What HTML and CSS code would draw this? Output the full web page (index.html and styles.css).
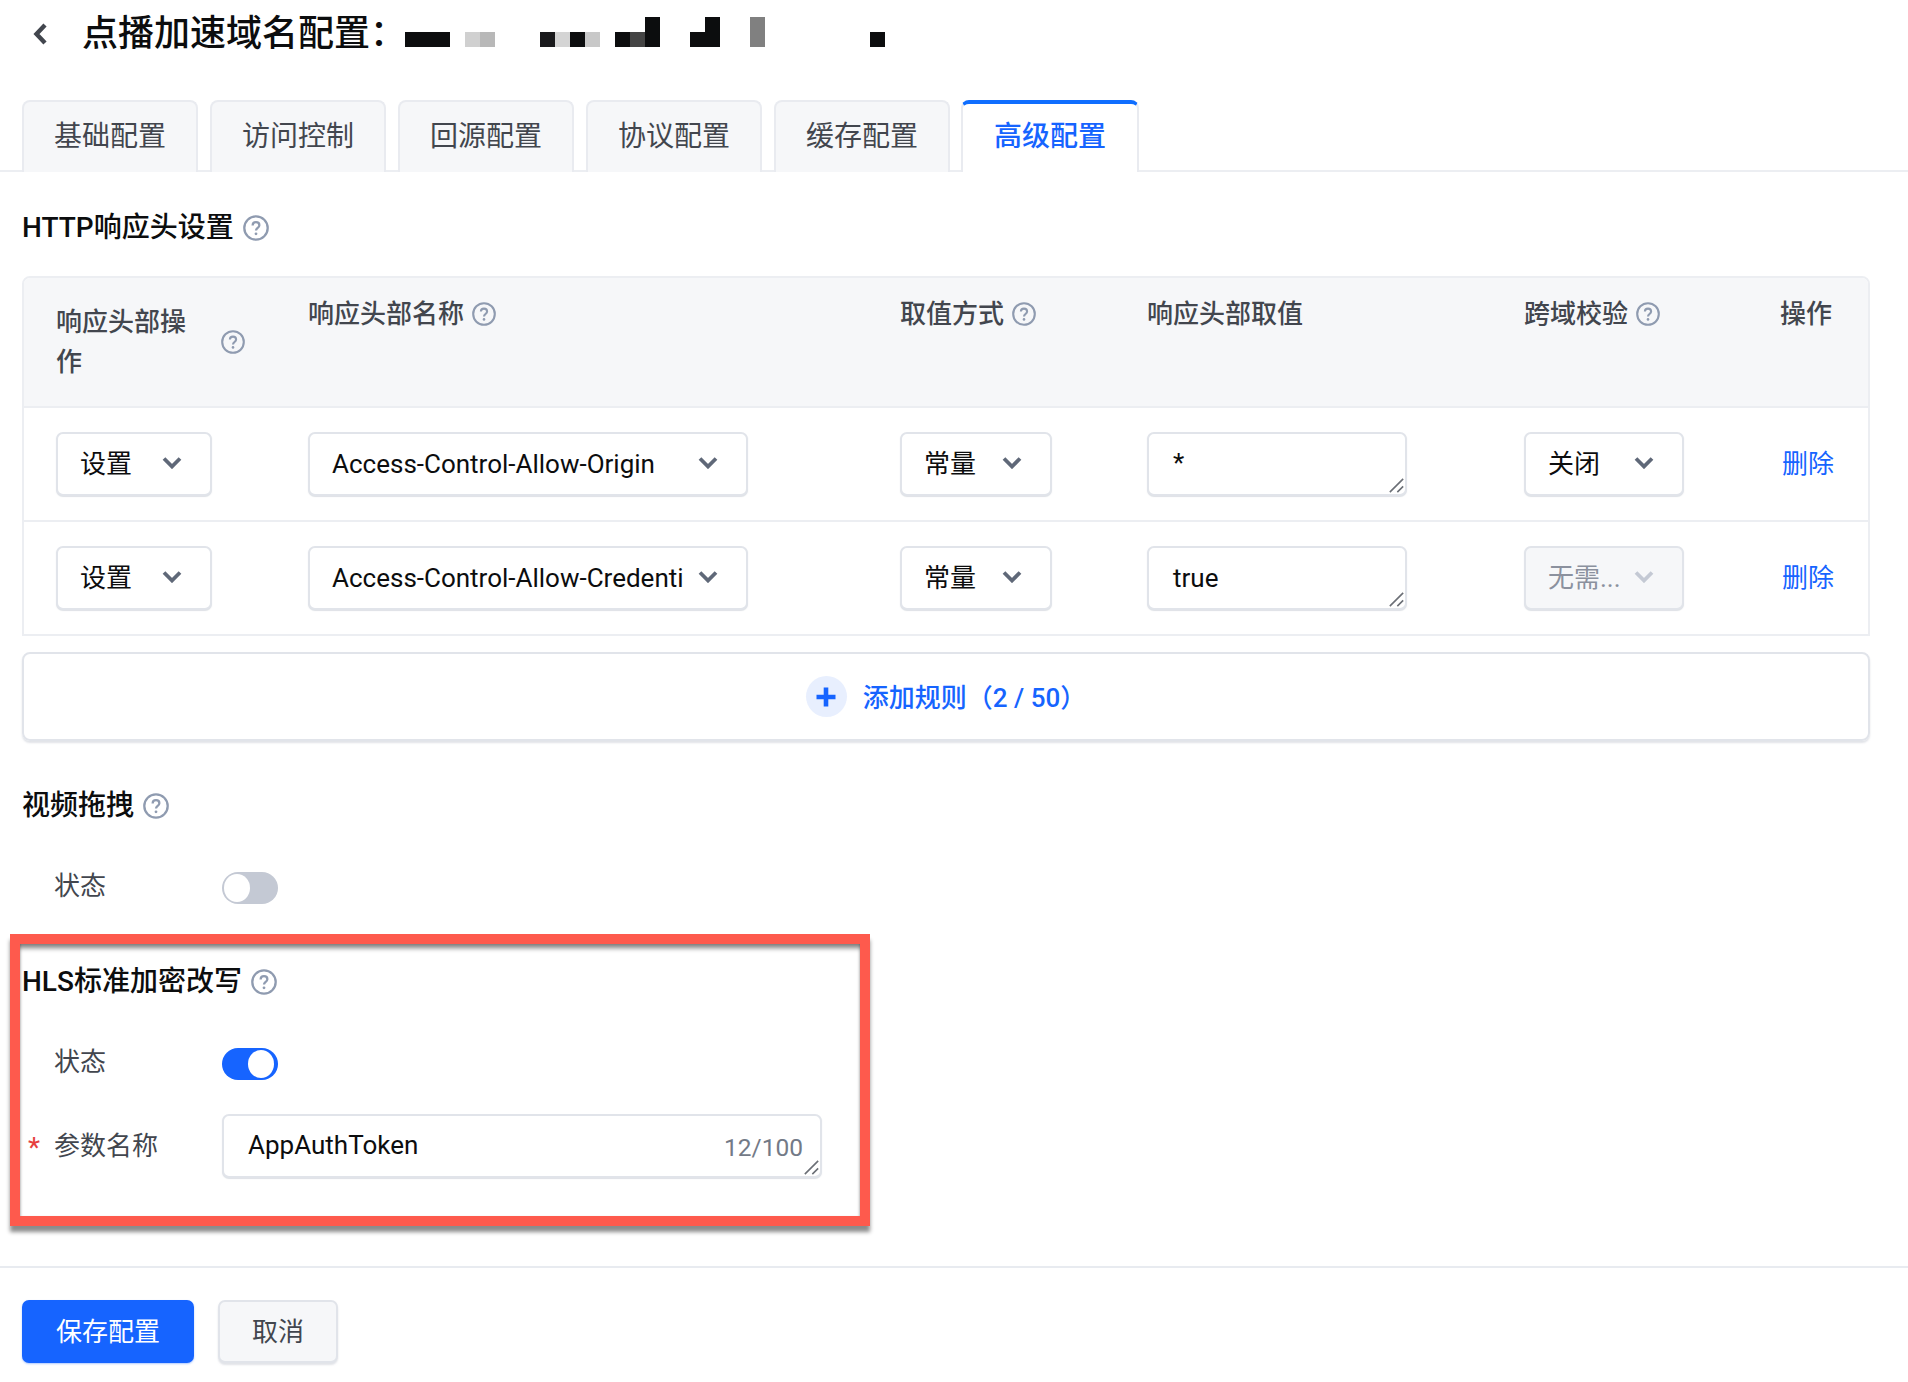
FILE: index.html
```html
<!DOCTYPE html>
<html lang="zh-CN">
<head>
<meta charset="utf-8">
<title>点播加速域名配置</title>
<link rel="stylesheet" href="styles.css">
</head>
<body>
<svg class="defs" aria-hidden="true">
  <defs>
    <symbol id="help" viewBox="0 0 24 24">
      <circle cx="12" cy="12" r="10.8" fill="none" stroke="#8f9bb0" stroke-width="2.1"/>
      <path d="M8.9 9.6c0-1.800 1.300-3 3.100-3s3.100 1.200 3.100 2.800c0 2.500-3.100 2.600-3.100 5" fill="none" stroke="#8f9bb0" stroke-width="2.100"/>
      <circle cx="12" cy="17.4" r="1.300" fill="#8f9bb0"/>
    </symbol>
    <symbol id="chev" viewBox="0 0 20 13">
      <path d="M2 2.500l8 8 8-8" fill="none" stroke="currentColor" stroke-width="3.800"/>
    </symbol>
    <symbol id="grip" viewBox="0 0 18 18">
      <path d="M1 17L17 1M10 17l7-7" fill="none" stroke="#6b6f76" stroke-width="1.900"/>
    </symbol>
  </defs>
</svg>

<header class="page-head">
  <svg class="back" viewBox="0 0 16 24"><path d="M13 3L4.500 12l8.500 9" fill="none" stroke="#42464e" stroke-width="4.400"/></svg>
  <h1 class="page-title">点播加速域名配置：</h1>
  <svg class="mosaic" width="480" height="30" viewBox="0 0 480 30">
    <rect x="0" y="15" width="45" height="15" fill="#0c0d0e"/>
    <rect x="60" y="15" width="15" height="15" fill="#d0d0d0"/>
    <rect x="75" y="15" width="15" height="15" fill="#b8b8b8"/>
    <rect x="135" y="15" width="15" height="15" fill="#1a1a1c"/>
    <rect x="150" y="15" width="15" height="15" fill="#d4d4d4"/>
    <rect x="165" y="15" width="15" height="15" fill="#0c0d0e"/>
    <rect x="180" y="15" width="15" height="15" fill="#c8c8c8"/>
    <rect x="210" y="15" width="15" height="15" fill="#0c0d0e"/>
    <rect x="225" y="15" width="15" height="15" fill="#444"/>
    <rect x="240" y="0" width="15" height="30" fill="#0c0d0e"/>
    <rect x="285" y="15" width="15" height="15" fill="#0c0d0e"/>
    <rect x="300" y="0" width="15" height="30" fill="#0c0d0e"/>
    <rect x="345" y="0" width="15" height="30" fill="#808080"/>
    <rect x="465" y="15" width="15" height="15" fill="#0c0d0e"/>
  </svg>
</header>

<nav class="tabs">
  <div class="tab">基础配置</div>
  <div class="tab">访问控制</div>
  <div class="tab">回源配置</div>
  <div class="tab">协议配置</div>
  <div class="tab">缓存配置</div>
  <div class="tab tab--active">高级配置</div>
</nav>

<main class="content">
  <h2 class="section-title section-title--first">HTTP响应头设置<svg class="help help--lg"><use href="#help"/></svg></h2>

  <div class="table">
    <div class="tr th-row">
      <div class="th th--wrap"><span class="th-wrap-text">响应头部操作</span><svg class="help"><use href="#help"/></svg></div>
      <div class="th">响应头部名称<svg class="help"><use href="#help"/></svg></div>
      <div class="th">取值方式<svg class="help"><use href="#help"/></svg></div>
      <div class="th">响应头部取值</div>
      <div class="th">跨域校验<svg class="help"><use href="#help"/></svg></div>
      <div class="th">操作</div>
    </div>
    <div class="tr td-row">
      <div class="select select--op"><span class="select-text">设置</span><svg class="chev"><use href="#chev"/></svg></div>
      <div class="select select--name"><span class="select-text">Access-Control-Allow-Origin</span><svg class="chev"><use href="#chev"/></svg></div>
      <div class="select select--mode"><span class="select-text">常量</span><svg class="chev"><use href="#chev"/></svg></div>
      <div class="area area--value"><span class="area-text area-text--star">*</span><svg class="grip"><use href="#grip"/></svg></div>
      <div class="select select--cors"><span class="select-text">关闭</span><svg class="chev"><use href="#chev"/></svg></div>
      <a class="link">删除</a>
    </div>
    <div class="tr td-row td-row--last">
      <div class="select select--op"><span class="select-text">设置</span><svg class="chev"><use href="#chev"/></svg></div>
      <div class="select select--name"><span class="select-text">Access-Control-Allow-Credenti</span><svg class="chev"><use href="#chev"/></svg></div>
      <div class="select select--mode"><span class="select-text">常量</span><svg class="chev"><use href="#chev"/></svg></div>
      <div class="area area--value"><span class="area-text">true</span><svg class="grip"><use href="#grip"/></svg></div>
      <div class="select select--cors select--disabled"><span class="select-text">无需...</span><svg class="chev"><use href="#chev"/></svg></div>
      <a class="link">删除</a>
    </div>
  </div>

  <div class="add-rule">
    <span class="add-icon"><svg viewBox="0 0 22 22"><path d="M11 1.500v19M1.500 11h19" fill="none" stroke="#1664ff" stroke-width="4.600"/></svg></span>
    <span class="add-text">添加规则（2 / 50）</span>
  </div>

  <h2 class="section-title section-title--video">视频拖拽<svg class="help help--lg"><use href="#help"/></svg></h2>
  <div class="form-row form-row--video">
    <span class="form-label">状态</span>
    <span class="switch"><span class="knob"></span></span>
  </div>

  <section class="highlight">
    <h2 class="section-title">HLS标准加密改写<svg class="help help--lg"><use href="#help"/></svg></h2>
    <div class="form-row form-row--status">
      <span class="form-label">状态</span>
      <span class="switch switch--on"><span class="knob"></span></span>
    </div>
    <div class="form-row form-row--req">
      <span class="star">*</span>
      <span class="form-label">参数名称</span>
      <div class="area area--param"><span class="area-text">AppAuthToken</span><span class="counter">12/100</span><svg class="grip"><use href="#grip"/></svg></div>
    </div>
  </section>
</main>

<footer class="foot">
  <button class="btn btn--primary">保存配置</button>
  <button class="btn btn--plain">取消</button>
</footer>
</body>
</html>
```

FILE: styles.css
```css
* { box-sizing: border-box; }
html, body { margin: 0; padding: 0; }
body {
  width: 1908px;
  height: 1382px;
  background: #fff;
  color: #0c0d0e;
  font-family: Roboto, "Noto Sans CJK SC", sans-serif;
  font-size: 26px;
  overflow: hidden;
}
.defs { display: block; width: 0; height: 0; }

.page-head { display: flex; align-items: center; height: 68px; margin-bottom: 32px; padding-left: 32px; }
.back { width: 16px; height: 24px; margin-right: 34px; }
.page-title { margin: 0; font-size: 36px; font-weight: 500; line-height: 44px; width: 323px; white-space: nowrap; }
.mosaic { display: block; margin-top: -4px; }

.tabs { display: flex; gap: 12px; height: 72px; padding-left: 22px; border-bottom: 2px solid #eceef2; }
.tab {
  width: 176px;
  height: 72px;
  display: flex;
  align-items: center;
  justify-content: center;
  background: #f6f7f9;
  border: 2px solid #e9ebf0;
  border-bottom: 0;
  border-radius: 8px 8px 0 0;
  color: #42464e;
  font-size: 28px;
  line-height: 40px;
}
.tab--active {
  width: 178px;
  margin-left: -1px;
  padding-bottom: 2px;
  background: #fff;
  border-top: 4px solid #0f6eff;
  color: #1664ff;
  font-weight: 500;
  position: relative;
}

.content { padding: 0 38px 0 22px; }
.section-title { margin: 0; display: flex; align-items: center; height: 36px; font-size: 28px; font-weight: 500; line-height: 36px; color: #0c0d0e; }
.section-title--first { margin-top: 38px; margin-bottom: 30px; }
.section-title--video { margin-top: 47px; }

.help { width: 24px; height: 24px; margin-left: 8px; flex: none; }
.help--lg { width: 26px; height: 26px; margin-left: 9px; }

.table { border: 2px solid #eceef2; border-radius: 8px 8px 0 0; }
.tr { display: grid; grid-template-columns: 252px 592px 247px 377px 256px 1fr; padding-left: 32px; }
.th-row { height: 130px; background: #f6f7f9; border-bottom: 2px solid #eceef2; border-radius: 6px 6px 0 0; padding-top: 16px; }
.th { display: flex; align-items: flex-start; line-height: 40px; color: #42464e; font-weight: 500; font-size: 26px; }
.th .help { margin-top: 8px; }
.th--wrap { padding-top: 8px; }
.th-wrap-text { width: 165px; padding-right: 31px; line-height: 40px; }
.th--wrap .help { margin: 28px 0 0 0; }

.td-row { height: 114px; padding-top: 24px; border-bottom: 2px solid #eceef2; }
.td-row--last { height: 112px; border-bottom: 0; }

.select, .area {
  height: 64px;
  background: #fff;
  border: 2px solid #e1e4ea;
  border-radius: 7px;
  box-shadow: 0 1px 1px rgba(180, 186, 198, .45);
}
.select { display: flex; align-items: center; justify-content: space-between; padding: 0 28px 0 22px; line-height: 36px; white-space: nowrap; }
.select--op { width: 156px; }
.select--name { width: 440px; }
.select--mode { width: 152px; }
.select--cors { width: 160px; }
.select--disabled { background: #f6f7f9; color: #8b919e; }
.select--disabled .chev { color: #c4c9d4; }
.select-text { display: block; }
.chev { width: 20px; height: 13px; color: #5f6878; margin-top: -4px; flex: none; }

.area { position: relative; padding: 0 24px; display: flex; align-items: center; }
.area--value { width: 260px; }
.area--param { width: 600px; }
.area-text { display: block; line-height: 36px; }
.area-text--star { margin-top: -2px; }
.grip { position: absolute; right: 1px; bottom: 1px; width: 15px; height: 15px; }
.counter { position: absolute; right: 17px; top: 14px; color: #737a87; line-height: 36px; font-size: 24.500px; }
.area--param .area-text { margin-top: -2px; }

.link { color: #1664ff; line-height: 64px; padding-left: 2px; }

.add-rule {
  margin-top: 16px;
  height: 89px;
  border: 2px solid #e1e4ea;
  border-radius: 8px;
  box-shadow: 0 2px 2px rgba(180, 186, 198, .4);
  display: flex;
  align-items: center;
  justify-content: center;
  gap: 16px;
  color: #1664ff;
}
.add-icon { width: 41px; height: 41px; border-radius: 50%; background: #e8effe; display: flex; align-items: center; justify-content: center; }
.add-icon svg { width: 22px; height: 22px; }
.add-text { line-height: 36px; font-weight: 500; font-size: 26px; padding-top: 2px; }

.form-row { display: flex; align-items: center; padding-left: 32px; }
.form-row--video { margin-top: 48px; }
.form-row--status { margin-top: 48px; }
.form-label { width: 168px; color: #42464e; line-height: 32px; margin-top: -4px; }
.form-row--req { margin-top: 34px; padding-left: 6px; }
.form-row--req .form-label { width: 168px; margin-top: 0; }
.star { width: 26px; color: #e63f3f; line-height: 32px; margin-top: 4px; font-size: 28px; }

.switch { display: flex; align-items: center; width: 56px; height: 32px; padding: 2px 4px 2px 2px; background: #c4c9d4; border-radius: 16px; }
.knob { width: 26px; height: 28px; border-radius: 50%; background: #fff; }
.switch--on { background: #1664ff; justify-content: flex-end; }

.highlight {
  margin: 30px -10px 0 -12px;
  width: 860px;
  padding: 20px 0 38px 2px;
  border: 10px solid #fe5a4d;
  box-shadow: 0 6px 4px rgba(0, 0, 0, .45), inset 0 6px 5px -2px rgba(0, 0, 0, .5), inset 2px 0 2px -1px rgba(0, 0, 0, .15), inset -2px 0 2px -1px rgba(0, 0, 0, .15);
}

.foot { margin-top: 40px; height: 116px; border-top: 2px solid #e8ebf0; padding: 32px 0 0 22px; display: flex; gap: 24px; align-items: flex-start; }
.btn { height: 63px; border-radius: 7px; font: inherit; line-height: 36px; padding: 0; }
.btn--primary { width: 172px; background: #1664ff; border: 0; color: #fff; box-shadow: 0 1px 2px rgba(22, 100, 255, .35); }
.btn--plain { width: 120px; background: #f6f7f9; border: 2px solid #e1e4ea; color: #42464e; box-shadow: 0 2px 2px rgba(180, 186, 198, .4); }
```
